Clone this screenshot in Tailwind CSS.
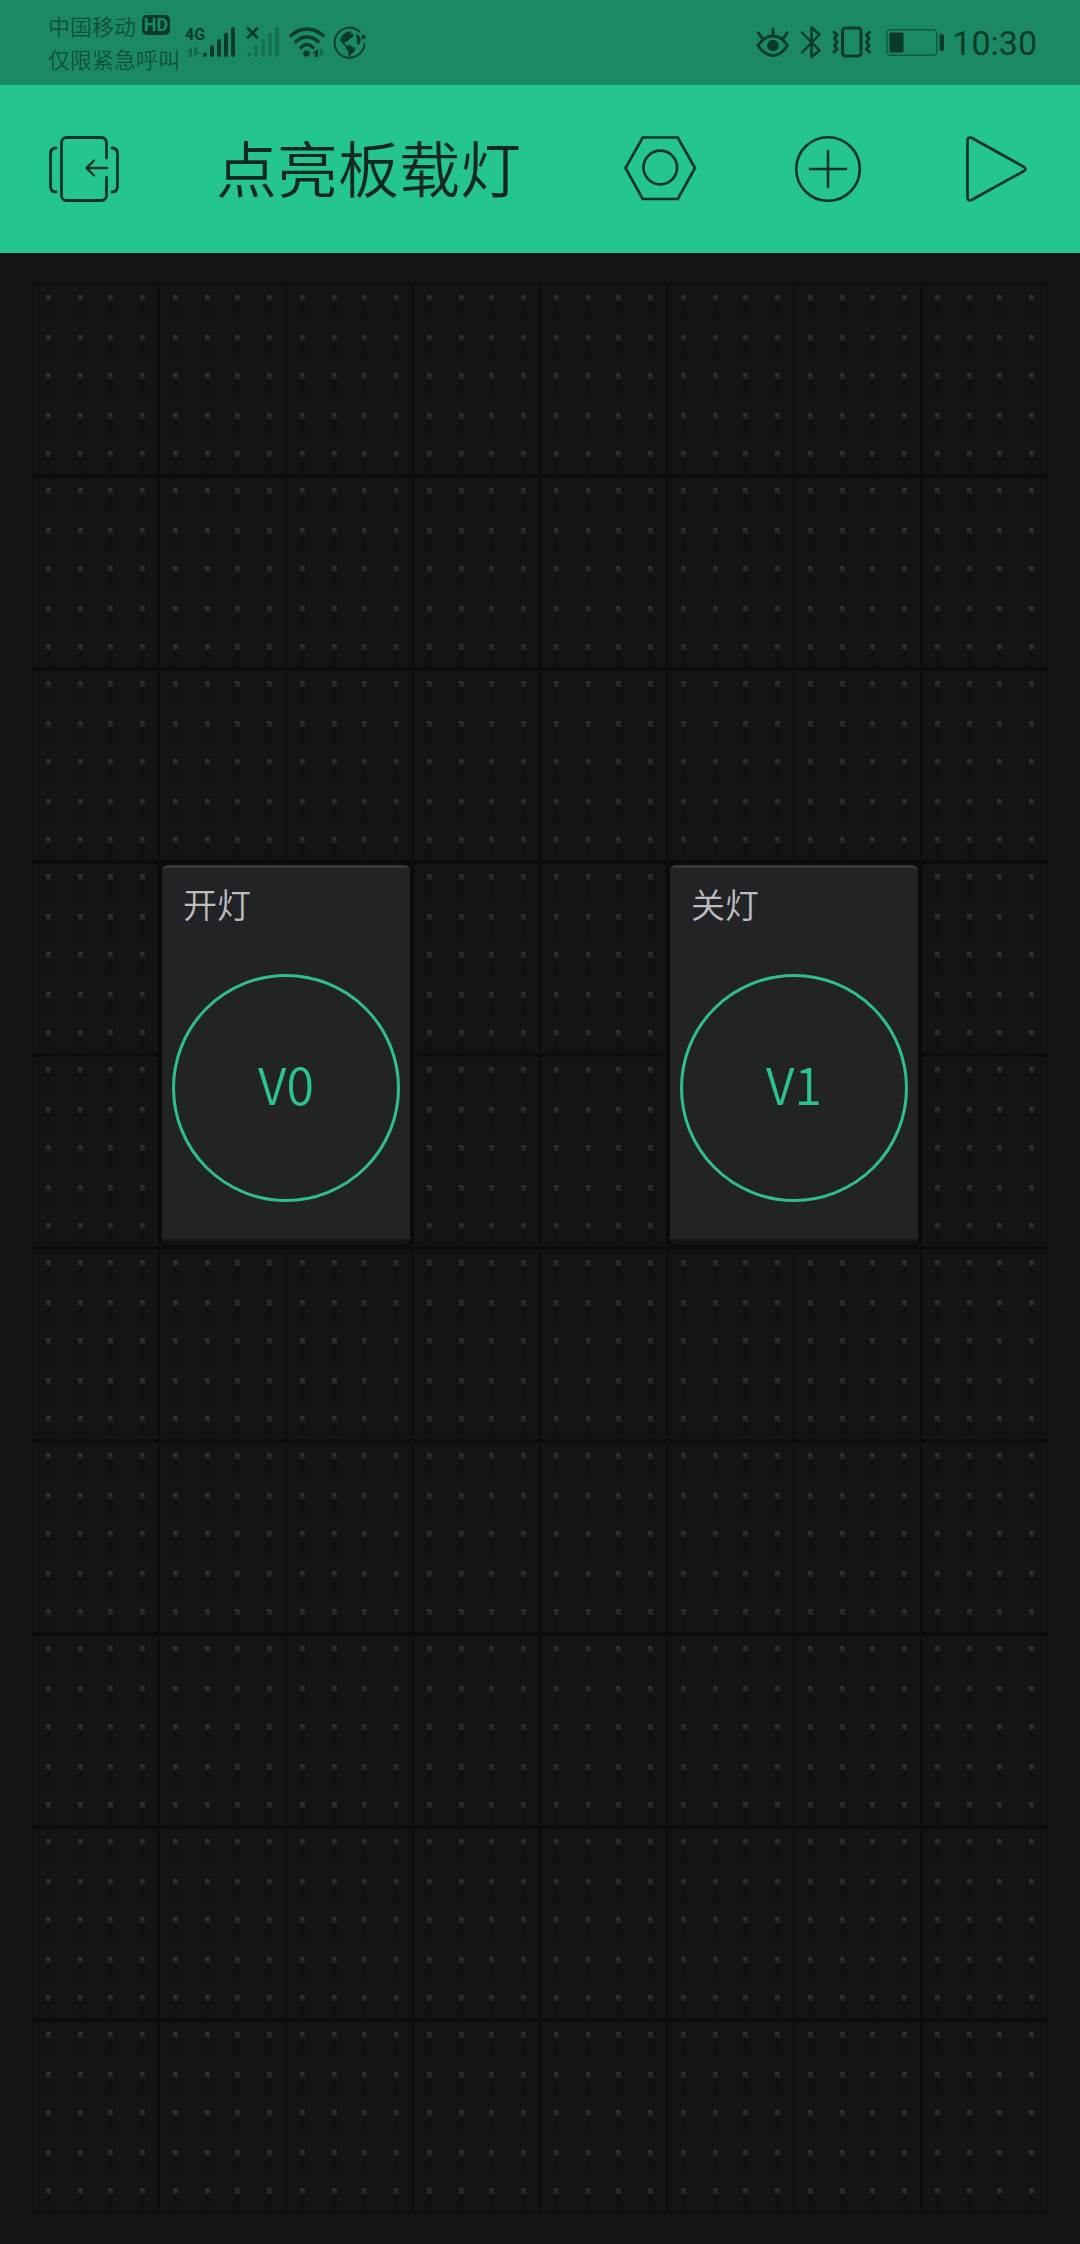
<!DOCTYPE html>
<html lang="zh-CN">
<head>
  <meta charset="UTF-8">
  <meta name="viewport" content="width=device-width, initial-scale=1.0">
  <title>点亮板载灯</title>
  <script src="https://cdn.jsdelivr.net/npm/@tailwindcss/browser@4"></script>
</head>
<body class="min-h-screen bg-[#141318] flex flex-col font-['Noto_Sans_CJK_SC',sans-serif] font-[350]">

<!-- Status bar -->
<div class="h-[85px] bg-[#1b8a64] text-[#0b3a2a] flex items-center justify-between pl-12 pr-[43px]">
  <div class="flex items-center">
    <div class="w-[136px] pb-0.5 text-[22px] leading-[33px] whitespace-nowrap text-[#0f5039]">
      <div class="flex items-center gap-1.5">
        <span>中国移动</span>
        <span class="w-7 h-5 rounded-[5px] bg-[#0b3a2a] text-[#1b8a64] font-['Roboto',sans-serif] font-bold text-lg leading-5 text-center">HD</span>
      </div>
      <div>仅限紧急呼叫</div>
    </div>
    <!-- 4G signal -->
    <svg class="w-[54px] h-9" viewBox="0 0 54 36" fill="none" stroke="currentColor" stroke-width="4" stroke-linecap="round">
      <text x="1" y="15" font-family="Roboto" font-size="16" font-weight="700" stroke="none" fill="currentColor">4G</text>
      <path d="M21 29.500v.5M28 22v8M35 16v14M42 9.500v20.500M49 4v26"/>
      <g stroke="none" fill="#14694c"><path d="M2 26.500L8 22v10H5v-5.500zM10 22v10l7-5h-4v-5z"/></g>
    </svg>
    <!-- Second SIM, no service -->
    <svg class="w-9 h-9 ml-1.5" viewBox="0 0 36 36" fill="none" stroke="#15724f" stroke-width="4" stroke-linecap="round">
      <path d="M5 29.500v.5M12 22v8M19 16v14M26 9.500v20.500M33 4v26"/>
      <path stroke="currentColor" stroke-width="2.800" d="M4 3.500l9 9M13 3.500l-9 9"/>
    </svg>
    <!-- Wifi -->
    <svg class="w-[42px] h-9 ml-1.5" viewBox="0 0 42 36" fill="none" stroke="currentColor" stroke-width="3.600" stroke-linecap="round">
      <path d="M5 10.500Q12 4 21 4t16 6.500M10 16.500Q15 12 21 12t11 4.500M15 22.500Q18 19.500 21 19.500t6 3"/>
      <circle cx="20.500" cy="28.500" r="3.200" fill="currentColor" stroke="none"/>
      <path fill="currentColor" stroke="none" d="M26 28.500L32 24v8h-3v-3.500z"/>
      <path fill="#14694c" stroke="none" d="M33.500 24v8l6-5h-3v-3z"/>
    </svg>
    <!-- Globe -->
    <svg class="w-9 h-9 ml-1" viewBox="0 0 36 36" fill="none" stroke="currentColor" stroke-width="1.900" stroke-linecap="round">
      <path d="M27.500 6.500A15 15 0 1 0 32.500 19"/>
      <circle cx="31.500" cy="12" r="2.200" fill="currentColor" stroke="none"/>
      <g fill="currentColor" stroke="none">
        <path d="M8 15l1-3 3-3.500 4-2 4 .2-1.500 2 3 .3-.5 3-3 1.500-2 2.500-3 1-.5 2 3 1.500-2 .5-3.500-2.500z"/>
        <path d="M13.500 21l4-1 3 2 3 1-1.500 4-3 2-1 2.500-1.500-1v-4l-2.500-2.500z"/>
        <path d="M23.500 9l3 1 2 3v4l-2 3-2-2.500.5-4z"/>
      </g>
    </svg>
  </div>

  <div class="flex items-center">
    <!-- Eye comfort -->
    <svg class="w-[34px] h-9" viewBox="0 0 34 36" fill="none" stroke="currentColor" stroke-width="2.900" stroke-linecap="round" stroke-linejoin="round">
      <path d="M2 20.500Q8.500 11 17 11t14.500 9.500Q25 30.500 17 30.500T2 20.500z"/>
      <path d="M17 4v6M2.500 8l3.500 5M31 8l-3.500 5"/>
      <circle cx="17" cy="20.500" r="5.800" fill="currentColor" stroke="none"/>
    </svg>
    <!-- Bluetooth -->
    <svg class="w-[22px] h-9 ml-2.5" viewBox="0 0 22 36" fill="none" stroke="currentColor" stroke-width="2.500" stroke-linecap="round" stroke-linejoin="round">
      <path d="M2 7.500L19.500 25.500 11.500 32V2.500L19.500 9.500 2 27.500"/>
    </svg>
    <!-- Vibrate -->
    <svg class="w-10 h-9 ml-2.5" viewBox="0 0 40 36" fill="none" stroke="currentColor" stroke-width="3" stroke-linecap="round" stroke-linejoin="round">
      <rect x="10.500" y="3" width="18.500" height="28" rx="3"/>
      <path d="M2 7l3 3-2.500 3.500L5 17l-2.500 3.500L5 24l-3 3M37.500 7l-3 3 2.500 3.500-2.500 3.500 2.500 3.500-2.500 3.500 3 3"/>
    </svg>
    <!-- Battery -->
    <svg class="w-[58px] h-9 ml-3.5" viewBox="0 0 58 36" fill="none">
      <rect x=".8" y="4.800" width="50" height="25.500" rx="3.500" stroke="#0f5a40" stroke-width="1.500"/>
      <rect x="3.500" y="7.500" width="14" height="20" rx="1" fill="currentColor"/>
      <rect x="53.500" y="9" width="4.500" height="17" rx="2" fill="currentColor"/>
    </svg>
    <time class="ml-2 font-['Roboto',sans-serif] font-normal text-[34px] leading-9">10:30</time>
  </div>
</div>

<!-- Toolbar -->
<header class="h-[168px] bg-[#24c58e] text-[#0e3329] flex items-center">
  <button type="button" aria-label="退出" class="size-[168px]">
    <svg class="size-full" viewBox="0 0 168 168" fill="none" stroke="currentColor" stroke-width="2.800" stroke-linecap="round" stroke-linejoin="round">
      <path d="M106.500 73V57.500a5 5 0 0 0-5-5h-35a5 5 0 0 0-5 5v53a5 5 0 0 0 5 5h35a5 5 0 0 0 5-5V92.500"/>
      <path d="M56 63q-5.500 0-5.500 6v32q0 6 5.500 6M112 63q5.500 0 5.500 6v32q0 6-5.500 6"/>
      <path stroke-width="2.300" d="M107 83H87M94 75.500L86.500 83l7.500 7.500"/>
    </svg>
  </button>
  <h1 class="ml-12 pb-1 flex-1 text-[61px] leading-[80px] whitespace-nowrap text-[#132823]">点亮板载灯</h1>
  <button type="button" aria-label="设置" class="size-[168px]">
    <svg class="size-full" viewBox="0 0 168 168" fill="none" stroke="currentColor" stroke-width="2.700">
      <path d="M66.700 52.500h35.100l17.200 30.500-17.200 31H66.700L49.500 83z"/>
      <circle cx="84.300" cy="82.500" r="16.800"/>
    </svg>
  </button>
  <button type="button" aria-label="添加" class="size-[168px]">
    <svg class="size-full" viewBox="0 0 168 168" fill="none" stroke="currentColor" stroke-width="2.600" stroke-linecap="round">
      <circle cx="84" cy="84" r="31.800"/>
      <path d="M66 84h36M84 66v36"/>
    </svg>
  </button>
  <button type="button" aria-label="运行" class="size-[168px]">
    <svg class="size-full" viewBox="0 0 168 168" fill="none" stroke="currentColor" stroke-width="2.700" stroke-linejoin="round">
      <path d="M55.500 55.500q0-4 4-2.700L112 82q3 2 0 4L59.500 115q-4 1.200-4-2.700z"/>
    </svg>
  </button>
</header>

<!-- Board -->
<main class="px-8 pt-[30px] pb-[30px]">
  <div class="relative">
    <div id="cells" class="absolute inset-0 grid grid-cols-8 auto-rows-[193px]" aria-hidden="true"></div>

    <div class="relative grid grid-cols-8 grid-rows-[repeat(10,193px)]">
      <section class="col-start-2 col-span-2 row-start-4 row-span-2 rounded-[9px] border-3 border-[#0b0b0d] bg-[#0b0b0d] flex">
        <div class="flex-1 rounded-md bg-[#222327] border-t-3 border-t-[#38383b] border-b-6 border-b-[#141416] flex flex-col">
          <h2 class="pl-[21px] pt-3 text-[34px] leading-[48px] text-[#bdbdbf]">开灯</h2>
          <button type="button" class="mt-[46px] mx-2.5 pb-2.5 h-[228px] rounded-full border-3 border-[#30be8f] text-[#2bc491] text-[50px] leading-none">V0</button>
        </div>
      </section>
      <section class="col-start-6 col-span-2 row-start-4 row-span-2 rounded-[9px] border-3 border-[#0b0b0d] bg-[#0b0b0d] flex">
        <div class="flex-1 rounded-md bg-[#222327] border-t-3 border-t-[#38383b] border-b-6 border-b-[#141416] flex flex-col">
          <h2 class="pl-[21px] pt-3 text-[34px] leading-[48px] text-[#bdbdbf]">关灯</h2>
          <button type="button" class="mt-[46px] mx-2.5 pb-2.5 h-[228px] rounded-full border-3 border-[#30be8f] text-[#2bc491] text-[50px] leading-none">V1</button>
        </div>
      </section>
    </div>
  </div>
</main>

<script>
  const COLS = 8;
  const ROWS = 10;
  const holesX = [13, 45, 75, 107];
  const holesY = [10, 50, 88, 128, 166];

  // Breadboard holes: a light pin with a faint shadow below
  let holes = '';
  for (const y of holesY) {
    for (const x of holesX) {
      holes += `<rect x="${x}" y="${y + 6}" width="5" height="17" fill="#111114"/>`;
      holes += `<rect x="${x}" y="${y}" width="5" height="6" fill="#252529"/>`;
      holes += `<rect x="${x}" y="${y}" width="4" height="3" fill="#2f2f32"/>`;
    }
  }

  const cell = `<div class="border-x border-y-2 border-[#0d0d11]">
    <svg class="w-full h-full" viewBox="0 0 125 189" preserveAspectRatio="none" shape-rendering="crispEdges">${holes}</svg>
  </div>`;
  document.getElementById('cells').innerHTML = cell.repeat(COLS * ROWS);
</script>

</body>
</html>
